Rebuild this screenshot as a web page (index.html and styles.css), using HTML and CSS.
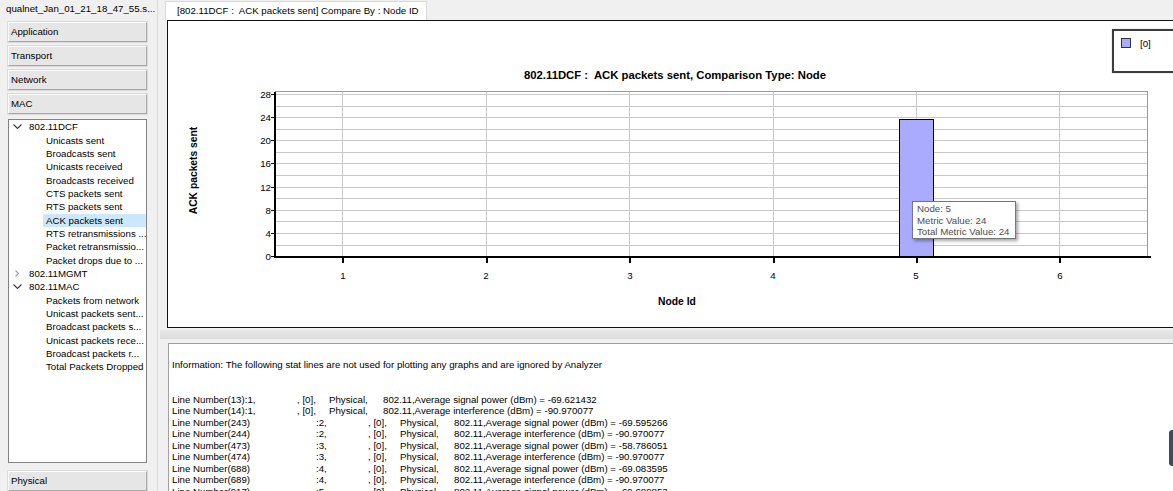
FILE: index.html
```html
<!DOCTYPE html>
<html>
<head>
<meta charset="utf-8">
<link rel="stylesheet" href="styles.css">
</head>
<body>
<div class="app">
  <aside class="side">
    <div class="side-title">qualnet_Jan_01_21_18_47_55.s...</div>
    <div class="btn">Application</div>
    <div class="btn">Transport</div>
    <div class="btn">Network</div>
    <div class="btn">MAC</div>
    <div class="tree">
      <div class="cat"><svg class="chev" width="9" height="6" viewBox="0 0 9 6"><polyline points="0.5,0.5 4.5,4.5 8.5,0.5" fill="none" stroke="#3c3c3c" stroke-width="1.2"/></svg><span>802.11DCF</span></div>
      <div class="item">Unicasts sent</div>
      <div class="item">Broadcasts sent</div>
      <div class="item">Unicasts received</div>
      <div class="item">Broadcasts received</div>
      <div class="item">CTS packets sent</div>
      <div class="item">RTS packets sent</div>
      <div class="item sel">ACK packets sent</div>
      <div class="item">RTS retransmissions ...</div>
      <div class="item">Packet retransmissio...</div>
      <div class="item">Packet drops due to ...</div>
      <div class="cat"><svg class="chev closed" width="9" height="8" viewBox="0 0 9 8"><polyline points="2.5,0.5 5.5,3.5 2.5,6.5" fill="none" stroke="#a0a0a0" stroke-width="1.2"/></svg><span>802.11MGMT</span></div>
      <div class="cat"><svg class="chev" width="9" height="6" viewBox="0 0 9 6"><polyline points="0.5,0.5 4.5,4.5 8.5,0.5" fill="none" stroke="#3c3c3c" stroke-width="1.2"/></svg><span>802.11MAC</span></div>
      <div class="item">Packets from network</div>
      <div class="item">Unicast packets sent...</div>
      <div class="item">Broadcast packets s...</div>
      <div class="item">Unicast packets rece...</div>
      <div class="item">Broadcast packets r...</div>
      <div class="item">Total Packets Dropped</div>
    </div>
    <div class="btn phys">Physical</div>
  </aside>
  <div class="divider"></div>
  <main class="main">
    <div class="tabbar"><div class="tab">[802.11DCF :  ACK packets sent] Compare By : Node ID</div></div>
    <div class="chart">
      <svg class="plot" width="1006" height="306" viewBox="168 21 1006 306">
        <text class="ttl" x="675" y="79" text-anchor="middle">802.11DCF :  ACK packets sent, Comparison Type: Node</text>
        <text class="axt" transform="translate(197,170.5) rotate(-90)" text-anchor="middle">ACK packets sent</text>
        <text class="axt" x="677" y="305" text-anchor="middle">Node Id</text>
        <path d="M275 245.5H1148M275 233.5H1148M275 221.5H1148M275 210.5H1148M275 198.5H1148M275 187.5H1148M275 175.5H1148M275 163.5H1148M275 152.5H1148M275 140.5H1148M275 129.5H1148M275 117.5H1148M275 106.5H1148M275 94.5H1148" stroke="#c8c8c8" stroke-width="1" fill="none"/>
        <path d="M342.5 92V256M486.5 92V256M629.5 92V256M773.5 92V256M916.5 92V256M1059.5 92V256" stroke="#c8c8c8" stroke-width="1" fill="none"/>
        <path d="M275 91.5H1148M1147.5 91V256" stroke="#9a9a9a" stroke-width="1" fill="none"/>
        <rect x="899.5" y="119.5" width="34" height="137" fill="#aaaaff" stroke="#000" stroke-width="1"/>
        <rect x="274" y="92" width="2" height="166" fill="#000"/>
        <rect x="274" y="256" width="877" height="2" fill="#000"/>
        <path d="M271 94.5H274M271 117.5H274M271 140.5H274M271 163.5H274M271 187.5H274M271 210.5H274M271 233.5H274M271 256.5H274" stroke="#000" stroke-width="1"/>
        <g class="tickx">
          <rect x="342" y="258" width="2" height="5"/>
          <rect x="486" y="258" width="2" height="5"/>
          <rect x="629" y="258" width="2" height="5"/>
          <rect x="773" y="258" width="2" height="5"/>
          <rect x="916" y="258" width="2" height="5"/>
          <rect x="1059" y="258" width="2" height="5"/>
        </g>
        <g class="lbl" text-anchor="end">
          <text x="271" y="98">28</text>
          <text x="271" y="121">24</text>
          <text x="271" y="144">20</text>
          <text x="271" y="167">16</text>
          <text x="271" y="191">12</text>
          <text x="271" y="214">8</text>
          <text x="271" y="237">4</text>
          <text x="271" y="260">0</text>
        </g>
        <g class="lbl" text-anchor="middle">
          <text x="343" y="279">1</text>
          <text x="486" y="279">2</text>
          <text x="630" y="279">3</text>
          <text x="773" y="279">4</text>
          <text x="916" y="279">5</text>
          <text x="1060" y="279">6</text>
        </g>
      </svg>
      <div class="legend"><span class="swatch"></span><span>[0]</span></div>
      <div class="tip">
        <div>Node: 5</div>
        <div>Metric Value: 24</div>
        <div>Total Metric Value: 24</div>
      </div>
    </div>
    <div class="split"></div>
    <div class="info">
      <div class="line">Information: The following stat lines are not used for plotting any graphs and are ignored by Analyzer</div>
      <div class="line">&nbsp;</div>
      <div class="line">&nbsp;</div>
      <div class="line"><span class="c-a">Line Number(13):1,</span><span class="c-b">, [0],</span><span class="c-p">Physical,</span><span>802.11,Average signal power (dBm) = -69.621432</span></div>
      <div class="line"><span class="c-a">Line Number(14):1,</span><span class="c-b">, [0],</span><span class="c-p">Physical,</span><span>802.11,Average interference (dBm) = -90.970077</span></div>
      <div class="line"><span class="c-ln">Line Number(243)</span><span class="c-n">:2,</span><span class="c-b">, [0],</span><span class="c-p">Physical,</span><span>802.11,Average signal power (dBm) = -69.595266</span></div>
      <div class="line"><span class="c-ln">Line Number(244)</span><span class="c-n">:2,</span><span class="c-b">, [0],</span><span class="c-p">Physical,</span><span>802.11,Average interference (dBm) = -90.970077</span></div>
      <div class="line"><span class="c-ln">Line Number(473)</span><span class="c-n">:3,</span><span class="c-b">, [0],</span><span class="c-p">Physical,</span><span>802.11,Average signal power (dBm) = -58.786051</span></div>
      <div class="line"><span class="c-ln">Line Number(474)</span><span class="c-n">:3,</span><span class="c-b">, [0],</span><span class="c-p">Physical,</span><span>802.11,Average interference (dBm) = -90.970077</span></div>
      <div class="line"><span class="c-ln">Line Number(688)</span><span class="c-n">:4,</span><span class="c-b">, [0],</span><span class="c-p">Physical,</span><span>802.11,Average signal power (dBm) = -69.083595</span></div>
      <div class="line"><span class="c-ln">Line Number(689)</span><span class="c-n">:4,</span><span class="c-b">, [0],</span><span class="c-p">Physical,</span><span>802.11,Average interference (dBm) = -90.970077</span></div>
      <div class="line"><span class="c-ln">Line Number(917)</span><span class="c-n">:5,</span><span class="c-b">, [0],</span><span class="c-p">Physical,</span><span>802.11,Average signal power (dBm) = -69.689853</span></div>
    </div>
  </main>
  <div class="edge-thumb"></div>
</div>
</body>
</html>
```

FILE: styles.css
```css
* { box-sizing: border-box; }
html, body { margin: 0; padding: 0; }
body {
  width: 1173px;
  height: 491px;
  overflow: hidden;
  background: #f0f0f0;
  font-family: "Liberation Sans", Arial, sans-serif;
  font-size: 9.7px;
  color: #000;
}
.app {
  position: relative;
  display: flex;
  width: 1173px;
  height: 491px;
}
.side {
  width: 157px;
  flex: none;
  display: flex;
  flex-direction: column;
}
.side-title {
  height: 18px;
  line-height: 17px;
  padding-left: 6px;
  white-space: nowrap;
}
.btn {
  margin: 4px 0 0 8px;
  width: 139px;
  height: 20px;
  line-height: 18px;
  padding-left: 2px;
  background: #e6e6e6;
  border-top: 1px solid #fdfdfd;
  border-left: 1px solid #fdfdfd;
  border-right: 1px solid #a8a8a8;
  border-bottom: 1px solid #a8a8a8;
  box-shadow: 0 0 0 1px #dadada;
}
.btn.phys { margin-top: 8px; }
.tree {
  margin: 5px 0 0 8px;
  width: 139px;
  height: 346px;
  background: #fff;
  border: 1px solid #828282;
  padding-top: 0.5px;
}
.cat, .item {
  height: 13.33px;
  line-height: 13.33px;
  white-space: nowrap;
}
.cat {
  display: flex;
  align-items: center;
}
.chev {
  margin-left: 4px;
  width: 9px;
  flex: none;
}
.chev.closed { height: 8px; }
.cat span { margin-left: 7px; }
.item {
  margin-left: 34px;
  padding-left: 3px;
}
.item.sel { background: #cce8ff; }
.divider {
  width: 3px;
  flex: none;
  border-left: 1px solid #dcdcdc;
}
.main {
  flex: 1;
  display: flex;
  flex-direction: column;
  min-width: 0;
}
.tabbar {
  height: 20px;
  flex: none;
  padding-left: 5px;
  padding-top: 1px;
}
.tab {
  display: inline-block;
  height: 19px;
  line-height: 18px;
  padding: 0 10px 0 11px;
  width: 262px;
  white-space: pre;
  background: #fff;
  border: 1px solid #d9d9d9;
  border-bottom: none;
}
.chart {
  position: relative;
  flex: none;
  margin-left: 7px;
  width: 1012px;
  height: 308px;
  background: #fff;
  border: 1px solid #111;
  overflow: hidden;
}
.plot {
  display: block;
  font-family: "Liberation Sans", Arial, sans-serif;
}
.plot .ttl {
  font-size: 11.3px;
  font-weight: bold;
  white-space: pre;
}
.plot .axt {
  font-size: 10.3px;
  font-weight: bold;
}
.plot .lbl { font-size: 9.7px; fill: #000; }
.plot .tickx rect { fill: #000; }
.legend {
  position: absolute;
  left: 944px;
  top: 8px;
  width: 80px;
  height: 44px;
  background: #fff;
  border: 2px solid #3c3c3c;
  display: flex;
  align-items: flex-start;
  padding: 7px 0 0 7px;
  gap: 9px;
  line-height: 11px;
  box-shadow: 0 0 1px #aaa;
}
.swatch {
  width: 10px;
  height: 10px;
  background: #aaaaff;
  border: 1px solid #333;
}
.tip {
  position: absolute;
  left: 744px;
  top: 180px;
  width: 104px;
  height: 38px;
  background: #fff;
  border: 1px solid #767676;
  padding: 1px 0 0 4px;
  line-height: 11.5px;
  color: #4e4e4e;
  box-shadow: 2px 2px 3px rgba(0,0,0,0.35);
}
.split {
  flex: none;
  margin-top: 2px;
  height: 9px;
  background: linear-gradient(#e8e8e8, #dcdcdc);
  margin-bottom: 4px;
}
.info {
  flex: 1;
  margin-left: 8px;
  background: #fff;
  border: 1px solid #a0a0a0;
  border-right: none;
  border-bottom: none;
  padding: 15px 0 0 3px;
  overflow: hidden;
}
.line {
  height: 11.5px;
  line-height: 11.5px;
  white-space: nowrap;
}
.line span { display: inline-block; }
.c-a { width: 125px; }
.c-b { width: 32px; }
.c-p { width: 54px; }
.c-ln { width: 144px; }
.c-n { width: 52px; }
.edge-thumb {
  position: absolute;
  left: 1169px;
  top: 430px;
  width: 8px;
  height: 36px;
  border-radius: 4px;
  background: #4a4a4a;
  box-shadow: inset 2px 0 0 #3a4e66;
}
```
